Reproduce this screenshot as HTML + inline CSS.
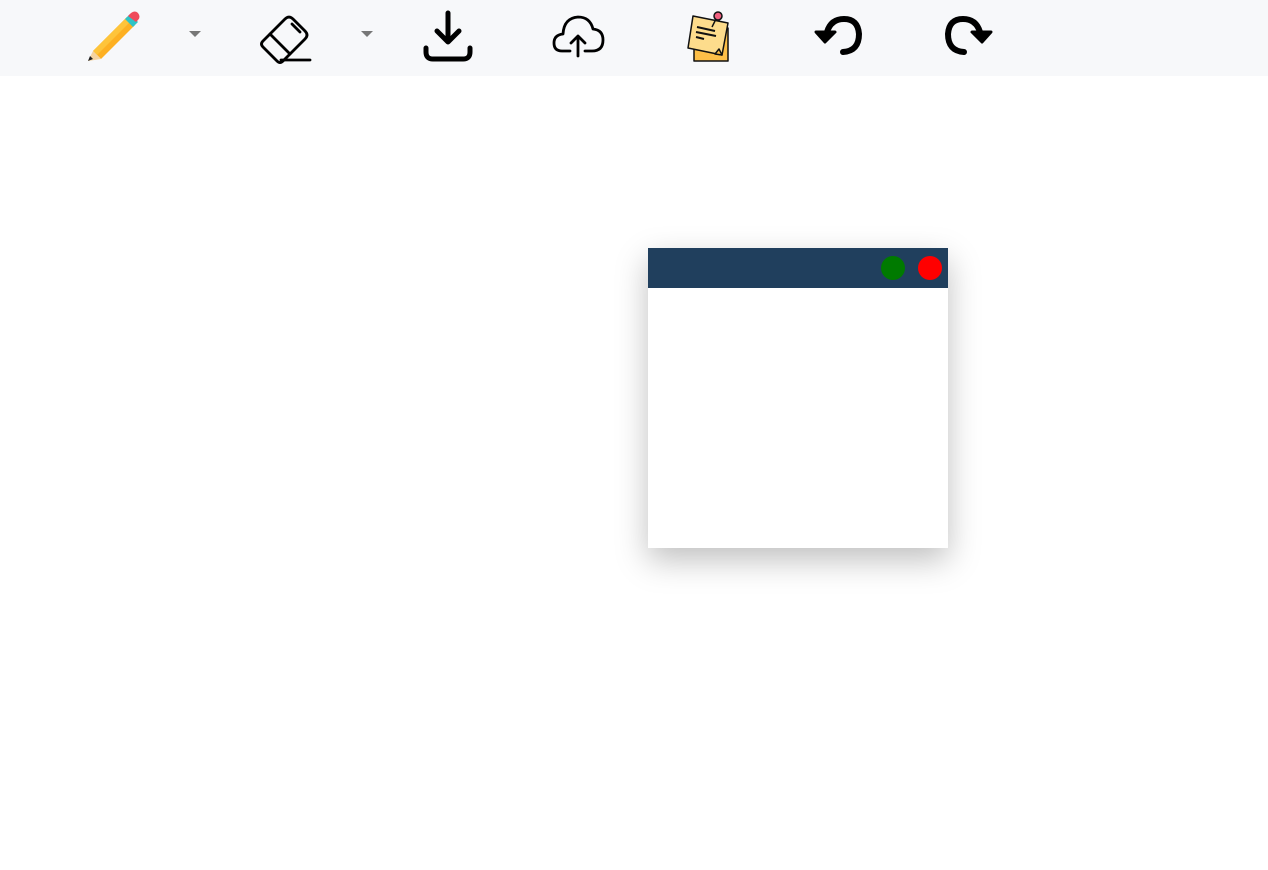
<!DOCTYPE html>
<html><head><meta charset="utf-8"><style>
html,body{margin:0;padding:0;width:1268px;height:870px;background:#fff;overflow:hidden;font-family:"Liberation Sans",sans-serif}
.bar{position:absolute;left:0;top:0;width:1268px;height:76px;background:#f7f8fa}
svg{position:absolute}
.caret{position:absolute;width:0;height:0;border-left:6px solid transparent;border-right:6px solid transparent;border-top:6px solid #777}
.win{position:absolute;left:648px;top:248px;width:300px;height:300px;background:#fff;box-shadow:0 12px 30px rgba(0,0,0,0.25)}
.tb{height:40px;background:#203f5d;position:relative}
.dot{position:absolute;top:8px;width:24px;height:24px;border-radius:50%}
</style></head><body>
<div class="bar">
<svg style="left:86px;top:10px" width="54" height="54" viewBox="0 0 54 54">
 <polygon points="7,41 41,7 49,15 15,49" fill="#fdb022"/>
 <polygon points="7,41 41,7 45,11 11,45" fill="#fec43a"/>
 <polygon points="39,9 44,4 52,12 47,17" fill="#2ec4c7"/>
 <path d="M42,6 L45,3 Q49,0 52,3 Q55,7 52,10 L50,12 Z" fill="#ef4a5a"/>
 <polygon points="7,41 15,49 2,51" fill="#f5d3a0"/>
 <polygon points="4,46 7,49 2,51" fill="#222"/>
</svg>
<div class="caret" style="left:189px;top:31px"></div>
<svg style="left:258px;top:10px" width="56" height="54" viewBox="0 0 56 54" fill="none" stroke="#000" stroke-width="2.8" stroke-linecap="round" stroke-linejoin="round">
 <path d="M5,31 L27,9 Q31,5 35,9 L47,21 Q51,25 47,29 L25,51 Q22,54 19,51 L5,37 Q2,34 5,31 Z"/>
 <path d="M12,24 L32,44"/>
 <path d="M34,14 L42,22"/>
 <path d="M23,50 L52,50"/>
</svg>
<div class="caret" style="left:361px;top:31px"></div>
<svg style="left:420px;top:8px" width="56" height="56" viewBox="0 0 56 56" fill="none" stroke="#000" stroke-width="5" stroke-linecap="round" stroke-linejoin="round">
 <path d="M28,5 L28,34 M17,23 L28,34 L39,23"/>
 <path d="M6,40 L6,44 Q6,51 13,51 L43,51 Q50,51 50,44 L50,40"/>
</svg>
<svg style="left:550px;top:12px" width="56" height="46" viewBox="0 0 56 46" fill="none" stroke="#000" stroke-width="2.8" stroke-linecap="round" stroke-linejoin="round">
 <path d="M20,39 L12,39 Q4,39 4,31 Q4,23 13,22 Q14,6 28,5 Q40,5 43,17 Q53,18 53,28 Q53,39 42,39 L35,39"/>
 <path d="M28,44 L28,24 M21,31 L28,24 L35,31"/>
</svg>
<svg style="left:685px;top:10px" width="48" height="54" viewBox="0 0 48 54" stroke="#111" stroke-width="1.5" stroke-linejoin="round">
 <rect x="9" y="18" width="34" height="33" fill="#fdbf48"/>
 <polygon points="8,6 43,13 37,45 3,38" fill="#fddc8c"/>
 <polygon points="37,45 30,44 34,39" fill="#fdbf48"/>
 <path d="M12,17 L30,21 M11,22 L31,26 M11,27 L19,29" stroke-width="2"/>
 <path d="M27,17 L31,9" stroke-width="1.5"/>
 <circle cx="33" cy="6" r="4" fill="#f06080"/>
</svg>
<svg style="left:812px;top:12px" width="54" height="48" viewBox="0 0 54 48" fill="none" stroke="#000" stroke-width="6" stroke-linecap="round" stroke-linejoin="round">
 <path d="M15,20 Q19,7 32,7 Q46,7 47,22 Q47,39 31,40"/>
 <path d="M4,20 L13,30 L23,20 Z" fill="#000" stroke-width="3"/>
</svg>
<svg style="left:941px;top:12px" width="54" height="48" viewBox="0 0 54 48" fill="none" stroke="#000" stroke-width="6" stroke-linecap="round" stroke-linejoin="round">
 <path d="M39,20 Q35,7 22,7 Q8,7 7,22 Q7,39 23,40"/>
 <path d="M50,20 L41,30 L31,20 Z" fill="#000" stroke-width="3"/>
</svg>
</div>
<div class="win"><div class="tb">
<div class="dot" style="left:233px;background:#007a00"></div>
<div class="dot" style="left:270px;background:#ff0000"></div>
</div></div>
</body></html>
